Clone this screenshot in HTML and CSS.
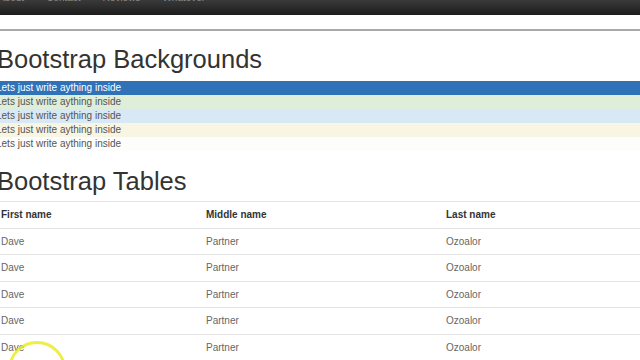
FILE: index.html
```html
<!DOCTYPE html>
<html>

<head>
    <meta charset="UTF-8">
    <meta name="viewport" content="width=device-width, initial-scale=1.0">
    <title>Bootstrap</title>
    <link rel="stylesheet" href="styles.css">
</head>

<body>
    <nav class="navbar">
        <ul class="nav">
            <li>About</li>
            <li>Contact</li>
            <li>Reviews</li>
            <li>Whatever</li>
        </ul>
    </nav>

    <hr class="rule">

    <div class="page">
        <h1>Bootstrap Backgrounds</h1>
        <p class="bg bg-primary">Lets just write aything inside</p>
        <p class="bg bg-success">Lets just write aything inside</p>
        <p class="bg bg-info">Lets just write aything inside</p>
        <p class="bg bg-warning">Lets just write aything inside</p>
        <p class="bg bg-danger">Lets just write aything inside</p>

        <h1>Bootstrap Tables</h1>
        <table class="table">
            <thead>
                <tr>
                    <th class="col-first">First name</th>
                    <th class="col-middle">Middle name</th>
                    <th>Last name</th>
                </tr>
            </thead>
            <tbody>
                <tr><td>Dave</td><td>Partner</td><td>Ozoalor</td></tr>
                <tr><td>Dave</td><td>Partner</td><td>Ozoalor</td></tr>
                <tr><td>Dave</td><td>Partner</td><td>Ozoalor</td></tr>
                <tr><td>Dave</td><td>Partner</td><td>Ozoalor</td></tr>
                <tr><td>Dave</td><td>Partner</td><td>Ozoalor</td></tr>
            </tbody>
        </table>
    </div>

    <div class="cursor"></div>
</body>

</html>
```

FILE: styles.css
```css
body {
    margin: 0;
    font-family: "Liberation Sans", Arial, sans-serif;
    font-size: 10px;
    color: #333;
    background-color: #fff;
    overflow: hidden;
}

/* dark top bar, mostly scrolled out of view */
.navbar {
    height: 15px;
    overflow: hidden;
    background: linear-gradient(#3a3a3a, #1c1c1c);
}

.nav {
    display: flex;
    gap: 22px;
    list-style: none;
    margin: -8px 0 0 -2px;
    padding: 0;
    font-size: 10px;
    line-height: 12px;
    color: #8a8a8a;
}

.rule {
    margin: 14px 0 0 0;
    border: 0;
    border-top: 2px solid #a9a9a9;
    height: 0;
}

.page {
    margin-left: -4px;
}

h1 {
    font-size: 25.5px;
    font-weight: normal;
    line-height: 1.1;
    color: #333;
    margin: 14px 0 8px 1px;
}

.bg {
    margin: 0;
    height: 14px;
    line-height: 14px;
    padding: 0;
    color: #555;
}

.bg-primary {
    background-color: #2f72b8;
    color: #fff;
}

.bg-success {
    background-color: #dfeed8;
}

.bg-info {
    background-color: #d8e8f4;
}

.bg-warning {
    background-color: #f9f5e3;
}

.bg-danger {
    background-color: #fdfdfb;
}

.bg + h1 {
    margin-top: 16px;
    margin-bottom: 6px;
}

/* Table */
.table {
    border-collapse: collapse;
    width: calc(100% + 4px);
}

.table th,
.table td {
    text-align: left;
    padding: 6px 5px;
    line-height: 13.5px;
    border-top: 1px solid #e4e4e4;
}

.table th {
    font-weight: bold;
    color: #333;
}

.table td {
    color: #666;
}

.col-first {
    width: 195px;
}

.col-middle {
    width: 230px;
}

/* recording cursor highlight */
.cursor {
    position: absolute;
    left: 8px;
    top: 341px;
    width: 52px;
    height: 52px;
    border: 3px solid rgba(235, 235, 40, 0.85);
    border-radius: 50%;
}
```
